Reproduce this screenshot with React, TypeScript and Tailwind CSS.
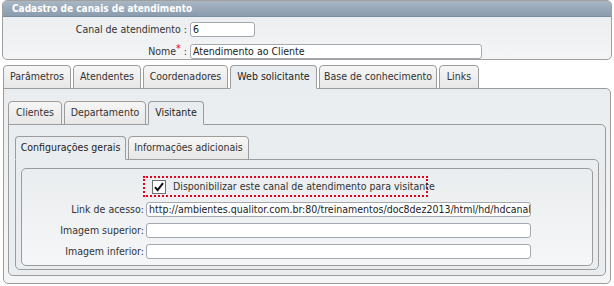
import React from 'react';

// Aba simples (ativa ou não)
const Tab = ({ label, width, active }: { label: string; width: string; active?: boolean }) => (
  <div
    className={`${width} h-[24px] flex items-center justify-center rounded-t-[4px] border border-[#9c9c9c] whitespace-nowrap ${
      active ? 'bg-[#eaedef] border-b-[#eaedef] text-[#222] relative z-10' : 'bg-gradient-to-b from-[#f6f6f6] to-[#e7e7e7] text-[#333]'
    }`}
  >
    {label}
  </div>
);

const Field = ({ value, width }: { value?: string; width: string }) => (
  <div className={`${width} h-[15px] bg-white border border-[#a3a9ae] rounded-[3px] px-[2px] leading-[13px] overflow-hidden whitespace-nowrap text-[#222]`}>
    {value}
  </div>
);

const CheckIcon = () => (
  <svg width="14" height="14" viewBox="0 0 14 14" className="shrink-0 block">
    <rect x="0.5" y="0.5" width="13" height="13" fill="#fff" stroke="#6f6f6f" />
    <path d="M3 7.2 L5.6 10.2 L11 3.2" fill="none" stroke="#111" strokeWidth="2" />
  </svg>
);

export default function App() {
  return (
    <div className="w-[614px] h-[286px] bg-white text-[10.5px] text-[#333] font-['DejaVu_Sans_Condensed','DejaVu_Sans',sans-serif] pt-0">
      {/* Cabeçalho do cadastro */}
      <div className="mx-[2px] h-[60px] rounded-[5px] border border-[#a0a0a0] overflow-hidden bg-gradient-to-b from-[#e8ebee] to-[#f4f5f6]">
        <div className="h-[16px] bg-gradient-to-b from-[#a9b6c4] to-[#8a9cae] border-b border-[#7a8ea2] pl-[9px] text-white font-bold text-[10px] leading-[15px]">
          Cadastro de canais de atendimento
        </div>
        <div className="flex flex-col gap-[6px] pt-[5px]">
          <div className="flex items-center">
            <div className="w-[187px] text-right pr-[3px]">Canal de atendimento :</div>
            <Field value="6" width="w-[65px]" />
          </div>
          <div className="flex items-center">
            <div className="w-[187px] text-right pr-[3px]">
              Nome<span className="text-[#e00] relative -top-[3px]">*</span> :
            </div>
            <Field value="Atendimento ao Cliente" width="w-[292px]" />
          </div>
        </div>
      </div>

      <div className="mx-[3px] mt-[5px]">
        <div className="flex gap-[2px] -mb-px">
          <Tab label="Parâmetros" width="w-[68px]" />
          <Tab label="Atendentes" width="w-[68px]" />
          <Tab label="Coordenadores" width="w-[85px]" />
          <Tab label="Web solicitante" width="w-[87px]" active />
          <Tab label="Base de conhecimento" width="w-[118px]" />
          <Tab label="Links" width="w-[40px]" />
        </div>
        <div className="h-[196px] border border-[#9c9c9c] rounded-b-[5px] rounded-tr-[5px] bg-gradient-to-b from-[#eaedef] to-[#f4f5f6] pt-[12px] pl-[4px] pr-[4px]">
          <div className="flex gap-[2px] -mb-px">
            <Tab label="Clientes" width="w-[54px]" />
            <Tab label="Departamento" width="w-[82px]" />
            <Tab label="Visitante" width="w-[56px]" active />
          </div>
          <div className="h-[152px] border border-[#9c9c9c] rounded-b-[5px] rounded-tr-[5px] bg-[#eaedef] pt-[11px] pl-[6px] pr-[6px]">
            <div className="flex gap-[2px] -mb-px">
              <Tab label="Configurações gerais" width="w-[111px]" active />
              <Tab label="Informações adicionais" width="w-[121px]" />
            </div>
            <div className="h-[111px] border border-[#9c9c9c] rounded-b-[5px] rounded-tr-[5px] bg-[#eaedef] pt-[8px] pl-[5px] pr-[5px]">
              <div className="h-[98px] border border-[#9c9c9c] rounded-[5px] bg-gradient-to-b from-[#eaedef] to-[#f5f6f7] pt-[7px]">
                <div className="ml-[121px] w-[285px] h-[21px] border-2 border-dotted border-[#e8001c] flex items-center pl-[7px] gap-[7px]">
                  <CheckIcon />
                  <span className="whitespace-nowrap">Disponibilizar este canal de atendimento para visitante</span>
                </div>
                <div className="flex flex-col gap-[5px] mt-[5px]">
                  <div className="flex items-center">
                    <div className="w-[124px] text-right pr-[2px]">Link de acesso:</div>
                    <Field value="http://ambientes.qualitor.com.br:80/treinamentos/doc8dez2013/html/hd/hdcanalatendimento" width="w-[385px]" />
                  </div>
                  <div className="flex items-center">
                    <div className="w-[124px] text-right pr-[2px]">Imagem superior:</div>
                    <Field width="w-[385px]" />
                  </div>
                  <div className="flex items-center">
                    <div className="w-[124px] text-right pr-[2px]">Imagem inferior:</div>
                    <Field width="w-[385px]" />
                  </div>
                </div>
              </div>
            </div>
          </div>
        </div>
      </div>
    </div>
  );
}
